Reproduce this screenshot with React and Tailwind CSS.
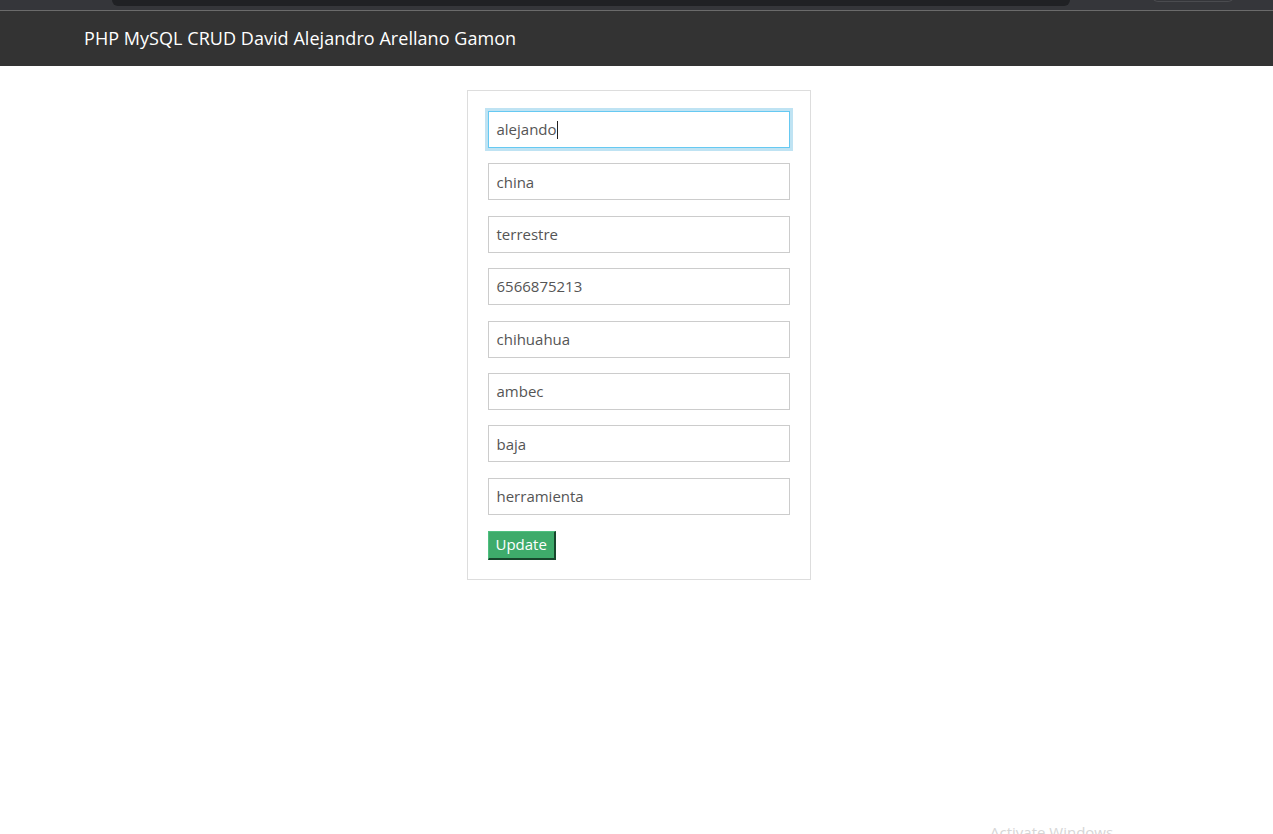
export default function App() {
  const values = ["china", "terrestre", "6566875213", "chihuahua", "ambec", "baja", "herramienta"];
  return (
    <div className="relative w-[1273px] h-[834px] overflow-hidden bg-white" style={{ fontFamily: '"Open Sans", sans-serif' }}>
      <div className="h-[10px] bg-[#35363a] relative">
        <div className="absolute left-[112px] top-0 w-[958px] h-[6px] bg-[#202124] rounded-b-[8px]"></div>
        <div className="absolute left-[1152px] top-[-4px] w-[82px] h-[6px] border border-[#4a4b4f] rounded-b-[8px]"></div>
      </div>
      <div className="h-px bg-[#6b6b6b]"></div>
      <div className="h-[55px] bg-[#333333] flex items-center pl-[84px]">
        <span className="text-white text-[18px] tracking-[0.05px]">PHP MySQL CRUD David Alejandro Arellano Gamon</span>
      </div>
      <div className="flex justify-center pt-[24px]">
        <div className="w-[344px] border border-[#dddddd] px-[20px] pt-[20px] pb-[19px] ml-[4px]">
          <div className="flex flex-col gap-[15.4px]">
            <div className="h-[37px] border border-[#66c9f2] ring-[3px] ring-[#bfe3f3] flex items-center px-[8px] text-[15px] text-[#555]">
              alejando<span className="inline-block w-px h-[18px] bg-[#222]"></span>
            </div>
            {values.map((v) => (
              <div key={v} className="h-[37px] border border-[#cccccc] flex items-center px-[8px] text-[15px] text-[#555]">
                {v}
              </div>
            ))}
          </div>
          <div className="mt-[16px] flex">
            <button className="h-[29px] px-[7px] bg-[#3eab6b] text-white text-[15px] border-t border-l border-[#4fc080] border-r-2 border-b-2 border-r-[#17462c] border-b-[#17462c] leading-none">
              Update
            </button>
          </div>
        </div>
      </div>
      <div className="absolute left-[990px] top-[822px] text-[#d6d6d6] text-[15px] leading-[20px]">Activate Windows</div>
    </div>
  );
}
